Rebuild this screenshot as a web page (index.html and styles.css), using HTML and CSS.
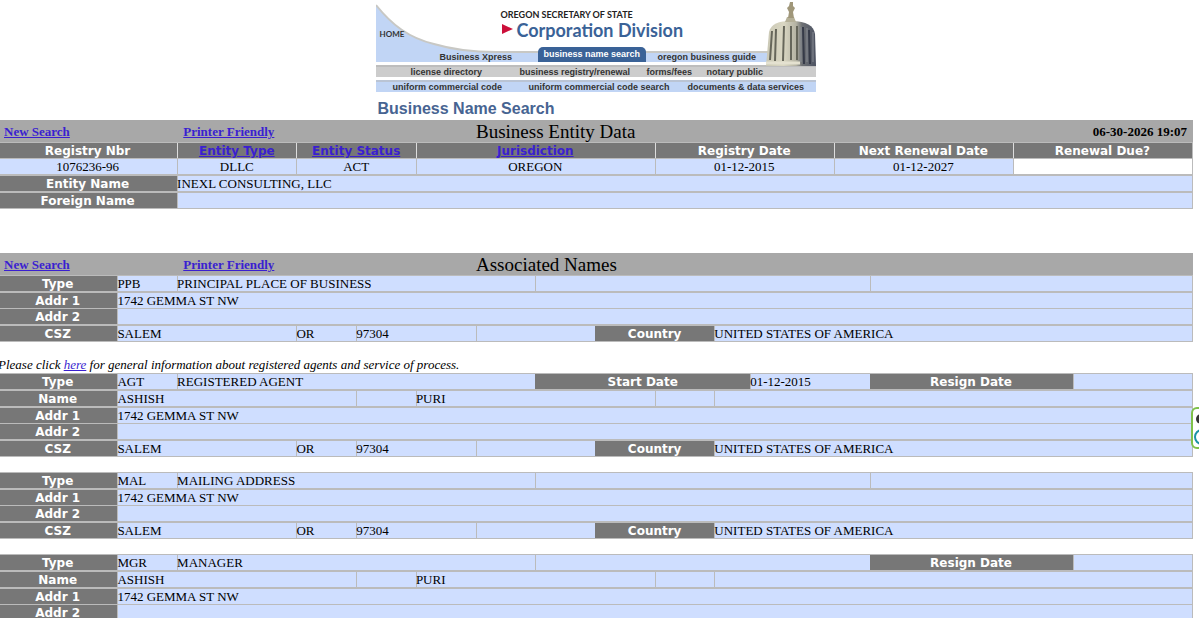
FILE: index.html
```html
<!DOCTYPE html>
<html lang="en">
<head>
  <meta charset="UTF-8">
  <title>Business Registry Business Name Search</title>
  <link rel="stylesheet" href="styles.css">
</head>
<body>

  <header class="banner">
    <svg class="banner-art" viewBox="0 0 440 92" width="440" height="92" aria-hidden="true">
      <defs>
        <linearGradient id="stone" x1="0" x2="1" y1="0" y2="0">
          <stop offset="0" stop-color="#c9c7b4"/>
          <stop offset="0.35" stop-color="#dad7c3"/>
          <stop offset="0.6" stop-color="#b5b3a3"/>
          <stop offset="0.72" stop-color="#6d7074"/>
          <stop offset="1" stop-color="#4c5262"/>
        </linearGradient>
      </defs>
      <path d="M0 5 C16 25 33 38 58 44 C78 50 95 52 120 52 L440 52 L440 62 L0 62 Z" fill="#c1d5f5"/>
      <path d="M0 5 C16 25 33 38 58 44 C78 50 95 52 120 52 L392 52" fill="none" stroke="#c8c8c4" stroke-width="2"/>
      <rect x="0" y="65" width="440" height="12" fill="#cccccc"/>
      <rect x="0" y="65" width="440" height="2" fill="#bdbdbd"/>
      <rect x="0" y="80" width="440" height="12" fill="#c1d5f5"/>
      <rect x="0" y="80" width="440" height="2" fill="#bac4d4"/>
      <polygon points="126,24 137,29 126,34" fill="#cc0f3a"/>
      <rect x="394" y="40" width="46" height="22" fill="#fff"/>
      <!-- capitol dome -->
      <path d="M390 66 L393 32 C395 24 402 21 416 21 C430 21 438 26 439 34 L440 66 Z" fill="url(#stone)"/>
      <path d="M396 31 L394 60 M400 29 L399 61 M408 26 L407 61 M415 26 L415 60 M421 26 L421 60" fill="none" stroke="#66665a" stroke-width="2"/>
      <path d="M427 27 L428 64 M433 30 L434 64" fill="none" stroke="#353a48" stroke-width="2"/>
      <path d="M425 27 L425 62 M431 28 L431 62 M437 32 L437 62" fill="none" stroke="#868a92" stroke-width="1"/>
      <path d="M390 63 H424" stroke="#e4e1d0" stroke-width="3"/>
      <path d="M409 22 L411 17 H418 L420 22 Z" fill="#b5b098"/>
      <path d="M412 18 L413 12 L411 8 L413 6 L414 2 H417 L417 6 L419 8 L417 12 L418 18 Z" fill="#a0977a"/>
    </svg>
    <a class="home" href="#">HOME</a>
    <div class="agency">
      <div class="state">OREGON SECRETARY OF STATE</div>
      <div class="division">Corporation Division</div>
    </div>
    <nav class="nav nav-top">
      <a href="#">Business Xpress</a>
      <a class="tab" href="#">business name search</a>
      <a href="#">oregon business guide</a>
    </nav>
    <nav class="nav nav-mid">
      <a href="#">license directory</a>
      <a href="#">business registry/renewal</a>
      <a href="#">forms/fees</a>
      <a href="#">notary public</a>
    </nav>
    <nav class="nav nav-low">
      <a href="#">uniform commercial code</a>
      <a href="#">uniform commercial code search</a>
      <a href="#">documents &amp; data services</a>
    </nav>
    <h1>Business Name Search</h1>
  </header>

  <main>
    <section class="entity">
      <div class="bar">
        <a href="#">New Search</a>
        <a href="#">Printer Friendly</a>
        <h2>Business Entity Data</h2>
        <time>06-30-2026 19:07</time>
      </div>
      <table class="summary">
        <tr>
          <th class="w15">Registry Nbr</th>
          <th class="w10"><a href="#">Entity Type</a></th>
          <th class="w10"><a href="#">Entity Status</a></th>
          <th class="w20"><a href="#">Jurisdiction</a></th>
          <th class="w15">Registry Date</th>
          <th class="w15">Next Renewal Date</th>
          <th class="w15">Renewal Due?</th>
        </tr>
        <tr>
          <td>1076236-96</td>
          <td>DLLC</td>
          <td>ACT</td>
          <td>OREGON</td>
          <td>01-12-2015</td>
          <td>01-12-2027</td>
          <td class="due"></td>
        </tr>
      </table>
      <table>
        <tr><th class="w15">Entity Name</th><td>INEXL CONSULTING, LLC</td></tr>
      </table>
      <table>
        <tr><th class="w15">Foreign Name</th><td></td></tr>
      </table>
    </section>

    <section class="names">
      <div class="bar">
        <a href="#">New Search</a>
        <a href="#">Printer Friendly</a>
        <h2>Associated Names</h2>
      </div>

      <div class="party">
        <table>
          <tr><th class="w10">Type</th><td class="w5">PPB</td><td class="w30">PRINCIPAL PLACE OF BUSINESS</td><td class="w28"></td><td></td></tr>
        </table>
        <table>
          <tr><th class="w10">Addr 1</th><td>1742 GEMMA ST NW</td></tr>
          <tr><th>Addr 2</th><td></td></tr>
        </table>
        <table>
          <tr><th class="w10">CSZ</th><td class="w15">SALEM</td><td class="w5">OR</td><td class="w10">97304</td><td class="w10"></td><th class="w10">Country</th><td>UNITED STATES OF AMERICA</td></tr>
        </table>
      </div>

      <p class="note">Please click <a href="#">here</a> for general information about registered agents and service of process.</p>

      <div class="party">
        <table>
          <tr><th class="w10">Type</th><td class="w5">AGT</td><td class="w30">REGISTERED AGENT</td><th class="w18">Start Date</th><td class="w10">01-12-2015</td><th class="w17">Resign Date</th><td></td></tr>
        </table>
        <table>
          <tr><th class="w10">Name</th><td class="w20">ASHISH</td><td class="w5"></td><td class="w20">PURI</td><td class="w5"></td><td></td></tr>
        </table>
        <table>
          <tr><th class="w10">Addr 1</th><td>1742 GEMMA ST NW</td></tr>
          <tr><th>Addr 2</th><td></td></tr>
        </table>
        <table>
          <tr><th class="w10">CSZ</th><td class="w15">SALEM</td><td class="w5">OR</td><td class="w10">97304</td><td class="w10"></td><th class="w10">Country</th><td>UNITED STATES OF AMERICA</td></tr>
        </table>
      </div>

      <div class="party">
        <table>
          <tr><th class="w10">Type</th><td class="w5">MAL</td><td class="w30">MAILING ADDRESS</td><td class="w28"></td><td></td></tr>
        </table>
        <table>
          <tr><th class="w10">Addr 1</th><td>1742 GEMMA ST NW</td></tr>
          <tr><th>Addr 2</th><td></td></tr>
        </table>
        <table>
          <tr><th class="w10">CSZ</th><td class="w15">SALEM</td><td class="w5">OR</td><td class="w10">97304</td><td class="w10"></td><th class="w10">Country</th><td>UNITED STATES OF AMERICA</td></tr>
        </table>
      </div>

      <div class="party">
        <table>
          <tr><th class="w10">Type</th><td class="w5">MGR</td><td class="w30">MANAGER</td><td class="w28"></td><th class="w17">Resign Date</th><td></td></tr>
        </table>
        <table>
          <tr><th class="w10">Name</th><td class="w20">ASHISH</td><td class="w5"></td><td class="w20">PURI</td><td class="w5"></td><td></td></tr>
        </table>
        <table>
          <tr><th class="w10">Addr 1</th><td>1742 GEMMA ST NW</td></tr>
          <tr><th>Addr 2</th><td></td></tr>
        </table>
      </div>
    </section>
  </main>

  <div class="side-widget">
    <svg viewBox="0 0 20 38" width="20" height="38" aria-hidden="true">
      <circle cx="8" cy="10" r="5" fill="#333"/>
      <circle cx="9" cy="28" r="7" fill="none" stroke="#1b93a5" stroke-width="2"/>
    </svg>
  </div>

</body>
</html>
```
FILE: styles.css
```css
html {
  overflow: hidden;
}

/* the page is scrolled a touch to the right, so the left edge is cut */
body {
  margin: 0 6px 0 -2px;
  font-family: "Liberation Serif", "Times New Roman", serif;
  font-size: 13px;
  line-height: 15px;
  color: #000;
  background: #fff;
}

a {
  color: #3a1fd0;
}

/* banner */
.banner {
  position: relative;
  width: 440px;
  margin: 0 auto;
  font-family: "Liberation Sans", Arial, sans-serif;
}

.banner a {
  color: #333;
  text-decoration: none;
}

.banner-art {
  position: absolute;
  top: 0;
  left: 0;
  z-index: -1;
}

.home {
  position: absolute;
  top: 27px;
  left: 4px;
  font: bold 8px/15px Lato, sans-serif;
}

.agency {
  height: 38px;
  padding: 9px 0 0 125px;
  font-family: Lato, sans-serif;
}

.state {
  font-size: 9px;
  line-height: 12px;
  font-weight: bold;
  color: #222;
}

.division {
  padding-left: 16px;
  font-size: 18px;
  line-height: 18px;
  font-weight: bold;
  color: #3a6297;
}

.nav {
  display: grid;
  font-size: 9px;
  font-weight: bold;
  line-height: 12px;
}

.nav-top {
  grid-template-columns: 98px 120px auto;
  align-items: end;
  height: 15px;
  padding-left: 64px;
  line-height: 10px;
}

.nav-top .tab {
  justify-self: start;
  padding: 2px 6px 3px;
  border-radius: 5px 5px 0 0;
  background: #3a6297;
  color: #fff;
}

.nav-mid {
  grid-template-columns: 109px 127px 60px auto;
  margin-top: 4px;
  padding-left: 35px;
}

.nav-low {
  grid-template-columns: 136px 159px auto;
  margin-top: 3px;
  padding-left: 17px;
}

h1 {
  margin: 0;
  padding: 7px 0 3px 2px;
  font-size: 16px;
  line-height: 17px;
  color: #476492;
}

/* grey title bars */
.bar {
  display: grid;
  grid-template-columns: 15% 25% 1fr auto;
  align-items: center;
  height: 22px;
  background: #a8a8a8;
}

.bar a,
.bar time {
  padding: 0 6px;
  font-weight: bold;
}

.bar h2 {
  margin: 0;
  font-size: 19px;
  font-weight: normal;
}

.names {
  margin-top: 44px;
}

/* record tables */
table {
  width: 100%;
  table-layout: fixed;
  border-spacing: 0;
  border: 1px solid #bbb;
  border-left: 0;
}

th,
td {
  height: 15px;
  padding: 0;
}

/* column lines are shadows so they take no width from the percentages */
td {
  background: #cfdeff;
  box-shadow: inset 1px 0 #bbb;
  text-align: left;
}

th {
  height: 13px;
  padding-top: 2px;
  font-family: "DejaVu Sans", Verdana, sans-serif;
  font-size: 12px;
  line-height: 13px;
  color: #fff;
  background: #777;
}

tr + tr td,
tr + tr th {
  border-top: 1px solid #bbb;
}

.summary td {
  text-align: center;
}

.summary th + th {
  box-shadow: inset 1px 0 #ddd;
}

.summary .due {
  background: #fff;
}

.w5 { width: 5%; }
.w10 { width: 10%; }
.w15 { width: 15%; }
.w17 { width: 17%; }
.w18 { width: 18%; }
.w20 { width: 20%; }
.w28 { width: 28%; }
.w30 { width: 30%; }

.party {
  margin-bottom: 15px;
}

.note {
  margin: 15px 0 1px;
  font-style: italic;
}

.side-widget {
  position: fixed;
  top: 407px;
  right: -16px;
  height: 38px;
  border: 2px solid #7fc14a;
  border-radius: 6px;
  background: #fff;
}
```
